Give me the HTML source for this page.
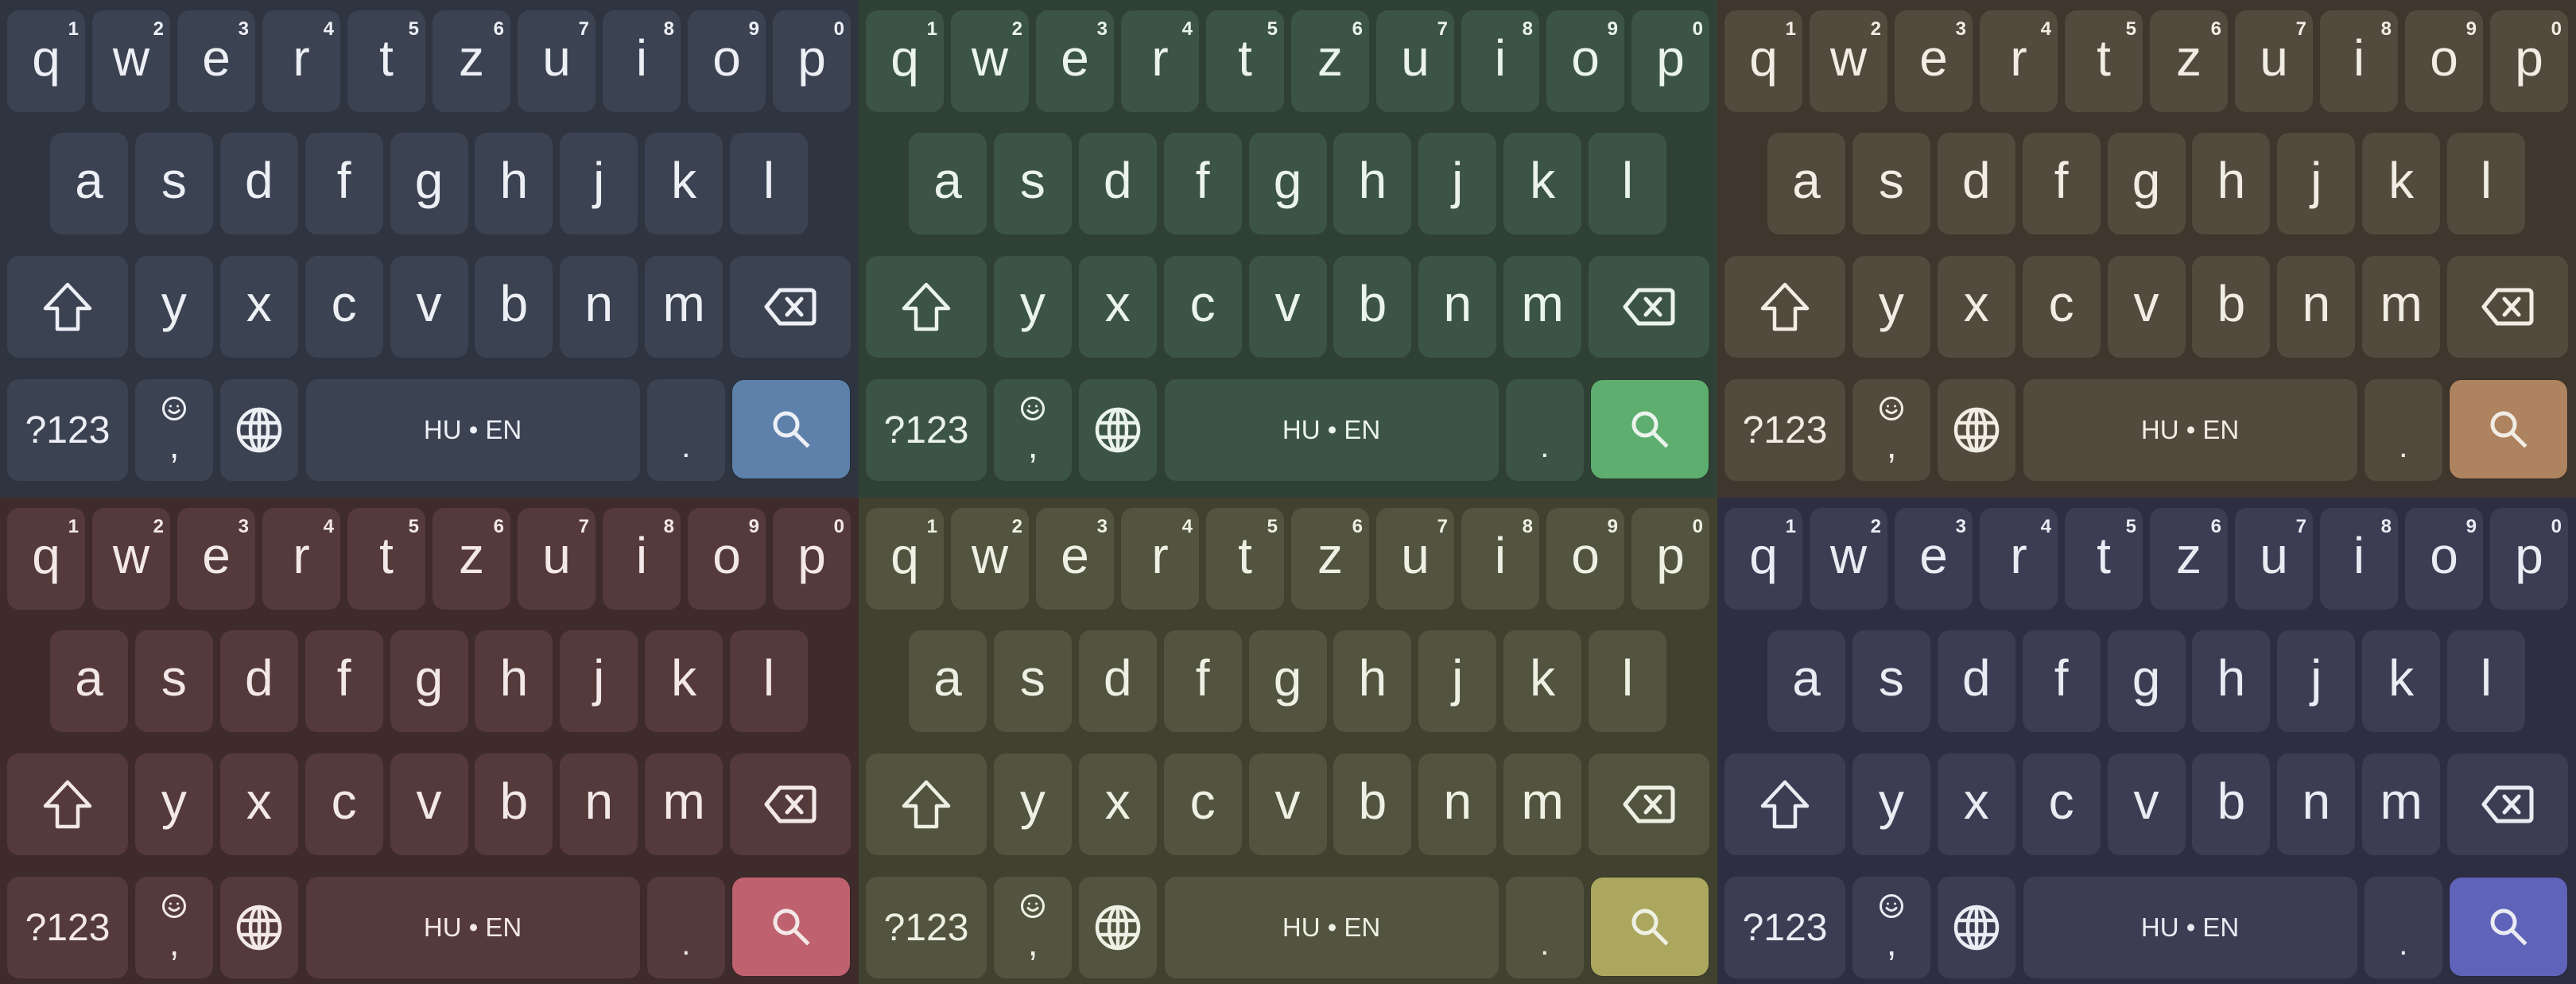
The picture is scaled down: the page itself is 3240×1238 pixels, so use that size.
<!DOCTYPE html>
<html><head><meta charset="utf-8">
<style>
*{margin:0;padding:0;box-sizing:border-box}
html,body{width:3240px;height:1238px;overflow:hidden;background:#2e3440}
body{position:relative;font-family:"Liberation Sans",sans-serif}
.p{position:absolute;width:1080px;height:626px;overflow:hidden;background:var(--bg);color:var(--fg)}
.r{position:absolute;display:flex;justify-content:space-between;height:128px}
.r1{top:13px;left:9px;width:1061px}
.r2{top:167px;left:63px;width:953px}
.r3{top:322px;left:9px;width:1061px}
.r4{top:477px;left:9px;width:1061px}
.k{position:relative;width:98px;height:100%;background:var(--key);border-radius:15px;display:flex;align-items:center;justify-content:center}
.w{width:152px}
.sp{width:420px;font-size:33px}
.l{font-size:64px;line-height:1;padding-bottom:8px}
.n{position:absolute;right:8px;top:10px;font-size:24px;font-weight:bold}
.t123{font-size:48px}
.s{width:148px;height:124px;margin:1px 1px 0 0;background:var(--acc);border-radius:15px;display:flex;align-items:center;justify-content:center;box-shadow:0 0 0 1px rgba(0,0,0,.15)}
.dot{font-size:40px;padding-top:42px}
.em{flex-direction:column;justify-content:flex-start;padding-top:22px}
.cm{font-size:46px;line-height:1;margin-top:8px}
svg.i{overflow:visible}
.c1{--bg:#2e3440;--key:#3b4252;--acc:#5e81ac;--fg:#eceff4}
.c2{--bg:#2f4135;--key:#3c5445;--acc:#5eae6f;--fg:#eaf3ec}
.c3{--bg:#3f362d;--key:#524a3c;--acc:#ae8360;--fg:#f1ece4}
.c4{--bg:#3f2b2c;--key:#553a3b;--acc:#bf616e;--fg:#f3e8e8}
.c5{--bg:#40412f;--key:#52543f;--acc:#aba75e;--fg:#eff0e4}
.c6{--bg:#2e2e42;--key:#3d3c53;--acc:#5f63b9;--fg:#ebebf3}
</style></head><body>
<svg width="0" height="0" style="position:absolute">
<defs>
<g id="shift"><path d="M30 3 L58 33 H43 V59 H17 V33 H2 Z" fill="none" stroke="currentColor" stroke-width="4.5" stroke-linejoin="round"/></g>
<g id="bs"><path d="M19 3 H58 a4 4 0 0 1 4 4 V41 a4 4 0 0 1 -4 4 H19 L2 24 Z" fill="none" stroke="currentColor" stroke-width="5" stroke-linejoin="round"/><path d="M28 14 L46 34 M46 14 L28 34" stroke="currentColor" stroke-width="5" stroke-linecap="round"/></g>
<g id="gl" fill="none" stroke="currentColor" stroke-width="4.5"><circle cx="28" cy="28" r="26"/><ellipse cx="28" cy="28" rx="11" ry="26"/><path d="M28 2 V54 M4 19 H52 M4 37 H52"/></g>
<g id="sr" fill="none" stroke="currentColor" stroke-width="5" stroke-linecap="square"><circle cx="16" cy="16" r="14"/><path d="M27 27 L42 42"/></g>
<g id="sm" fill="none" stroke="currentColor" stroke-width="3"><circle cx="15" cy="15" r="13.5"/><circle cx="10.5" cy="12" r="1.5" fill="currentColor" stroke="none"/><circle cx="19.5" cy="12" r="1.5" fill="currentColor" stroke="none"/><path d="M9 17.5 Q15 23.5 21 17.5" stroke-linecap="round"/></g>
</defs></svg>

<div class="p c1" style="left:0;top:0">
<div class="r r1"><div class="k"><span class="l">q</span><span class="n">1</span></div><div class="k"><span class="l">w</span><span class="n">2</span></div><div class="k"><span class="l">e</span><span class="n">3</span></div><div class="k"><span class="l">r</span><span class="n">4</span></div><div class="k"><span class="l">t</span><span class="n">5</span></div><div class="k"><span class="l">z</span><span class="n">6</span></div><div class="k"><span class="l">u</span><span class="n">7</span></div><div class="k"><span class="l">i</span><span class="n">8</span></div><div class="k"><span class="l">o</span><span class="n">9</span></div><div class="k"><span class="l">p</span><span class="n">0</span></div></div>
<div class="r r2"><div class="k"><span class="l">a</span></div><div class="k"><span class="l">s</span></div><div class="k"><span class="l">d</span></div><div class="k"><span class="l">f</span></div><div class="k"><span class="l">g</span></div><div class="k"><span class="l">h</span></div><div class="k"><span class="l">j</span></div><div class="k"><span class="l">k</span></div><div class="k"><span class="l">l</span></div></div>
<div class="r r3"><div class="k w"><svg class="i" width="60" height="62" viewBox="0 0 60 62"><use href="#shift"/></svg></div><div class="k"><span class="l">y</span></div><div class="k"><span class="l">x</span></div><div class="k"><span class="l">c</span></div><div class="k"><span class="l">v</span></div><div class="k"><span class="l">b</span></div><div class="k"><span class="l">n</span></div><div class="k"><span class="l">m</span></div><div class="k w"><svg class="i" width="64" height="48" viewBox="0 0 64 48"><use href="#bs"/></svg></div></div>
<div class="r r4"><div class="k w"><span class="t123">?123</span></div><div class="k em"><svg class="i" width="30" height="30" viewBox="0 0 30 30"><use href="#sm"/></svg><span class="cm">,</span></div><div class="k"><svg class="i" width="56" height="56" viewBox="0 0 56 56"><use href="#gl"/></svg></div><div class="k sp">HU • EN</div><div class="k"><span class="dot">.</span></div><div class="s"><svg class="i" width="44" height="44" viewBox="0 0 44 44"><use href="#sr"/></svg></div></div>
</div>

<div class="p c2" style="left:1080px;top:0">
<div class="r r1"><div class="k"><span class="l">q</span><span class="n">1</span></div><div class="k"><span class="l">w</span><span class="n">2</span></div><div class="k"><span class="l">e</span><span class="n">3</span></div><div class="k"><span class="l">r</span><span class="n">4</span></div><div class="k"><span class="l">t</span><span class="n">5</span></div><div class="k"><span class="l">z</span><span class="n">6</span></div><div class="k"><span class="l">u</span><span class="n">7</span></div><div class="k"><span class="l">i</span><span class="n">8</span></div><div class="k"><span class="l">o</span><span class="n">9</span></div><div class="k"><span class="l">p</span><span class="n">0</span></div></div>
<div class="r r2"><div class="k"><span class="l">a</span></div><div class="k"><span class="l">s</span></div><div class="k"><span class="l">d</span></div><div class="k"><span class="l">f</span></div><div class="k"><span class="l">g</span></div><div class="k"><span class="l">h</span></div><div class="k"><span class="l">j</span></div><div class="k"><span class="l">k</span></div><div class="k"><span class="l">l</span></div></div>
<div class="r r3"><div class="k w"><svg class="i" width="60" height="62" viewBox="0 0 60 62"><use href="#shift"/></svg></div><div class="k"><span class="l">y</span></div><div class="k"><span class="l">x</span></div><div class="k"><span class="l">c</span></div><div class="k"><span class="l">v</span></div><div class="k"><span class="l">b</span></div><div class="k"><span class="l">n</span></div><div class="k"><span class="l">m</span></div><div class="k w"><svg class="i" width="64" height="48" viewBox="0 0 64 48"><use href="#bs"/></svg></div></div>
<div class="r r4"><div class="k w"><span class="t123">?123</span></div><div class="k em"><svg class="i" width="30" height="30" viewBox="0 0 30 30"><use href="#sm"/></svg><span class="cm">,</span></div><div class="k"><svg class="i" width="56" height="56" viewBox="0 0 56 56"><use href="#gl"/></svg></div><div class="k sp">HU • EN</div><div class="k"><span class="dot">.</span></div><div class="s"><svg class="i" width="44" height="44" viewBox="0 0 44 44"><use href="#sr"/></svg></div></div>
</div>

<div class="p c3" style="left:2160px;top:0">
<div class="r r1"><div class="k"><span class="l">q</span><span class="n">1</span></div><div class="k"><span class="l">w</span><span class="n">2</span></div><div class="k"><span class="l">e</span><span class="n">3</span></div><div class="k"><span class="l">r</span><span class="n">4</span></div><div class="k"><span class="l">t</span><span class="n">5</span></div><div class="k"><span class="l">z</span><span class="n">6</span></div><div class="k"><span class="l">u</span><span class="n">7</span></div><div class="k"><span class="l">i</span><span class="n">8</span></div><div class="k"><span class="l">o</span><span class="n">9</span></div><div class="k"><span class="l">p</span><span class="n">0</span></div></div>
<div class="r r2"><div class="k"><span class="l">a</span></div><div class="k"><span class="l">s</span></div><div class="k"><span class="l">d</span></div><div class="k"><span class="l">f</span></div><div class="k"><span class="l">g</span></div><div class="k"><span class="l">h</span></div><div class="k"><span class="l">j</span></div><div class="k"><span class="l">k</span></div><div class="k"><span class="l">l</span></div></div>
<div class="r r3"><div class="k w"><svg class="i" width="60" height="62" viewBox="0 0 60 62"><use href="#shift"/></svg></div><div class="k"><span class="l">y</span></div><div class="k"><span class="l">x</span></div><div class="k"><span class="l">c</span></div><div class="k"><span class="l">v</span></div><div class="k"><span class="l">b</span></div><div class="k"><span class="l">n</span></div><div class="k"><span class="l">m</span></div><div class="k w"><svg class="i" width="64" height="48" viewBox="0 0 64 48"><use href="#bs"/></svg></div></div>
<div class="r r4"><div class="k w"><span class="t123">?123</span></div><div class="k em"><svg class="i" width="30" height="30" viewBox="0 0 30 30"><use href="#sm"/></svg><span class="cm">,</span></div><div class="k"><svg class="i" width="56" height="56" viewBox="0 0 56 56"><use href="#gl"/></svg></div><div class="k sp">HU • EN</div><div class="k"><span class="dot">.</span></div><div class="s"><svg class="i" width="44" height="44" viewBox="0 0 44 44"><use href="#sr"/></svg></div></div>
</div>

<div class="p c4" style="left:0;top:626px">
<div class="r r1"><div class="k"><span class="l">q</span><span class="n">1</span></div><div class="k"><span class="l">w</span><span class="n">2</span></div><div class="k"><span class="l">e</span><span class="n">3</span></div><div class="k"><span class="l">r</span><span class="n">4</span></div><div class="k"><span class="l">t</span><span class="n">5</span></div><div class="k"><span class="l">z</span><span class="n">6</span></div><div class="k"><span class="l">u</span><span class="n">7</span></div><div class="k"><span class="l">i</span><span class="n">8</span></div><div class="k"><span class="l">o</span><span class="n">9</span></div><div class="k"><span class="l">p</span><span class="n">0</span></div></div>
<div class="r r2"><div class="k"><span class="l">a</span></div><div class="k"><span class="l">s</span></div><div class="k"><span class="l">d</span></div><div class="k"><span class="l">f</span></div><div class="k"><span class="l">g</span></div><div class="k"><span class="l">h</span></div><div class="k"><span class="l">j</span></div><div class="k"><span class="l">k</span></div><div class="k"><span class="l">l</span></div></div>
<div class="r r3"><div class="k w"><svg class="i" width="60" height="62" viewBox="0 0 60 62"><use href="#shift"/></svg></div><div class="k"><span class="l">y</span></div><div class="k"><span class="l">x</span></div><div class="k"><span class="l">c</span></div><div class="k"><span class="l">v</span></div><div class="k"><span class="l">b</span></div><div class="k"><span class="l">n</span></div><div class="k"><span class="l">m</span></div><div class="k w"><svg class="i" width="64" height="48" viewBox="0 0 64 48"><use href="#bs"/></svg></div></div>
<div class="r r4"><div class="k w"><span class="t123">?123</span></div><div class="k em"><svg class="i" width="30" height="30" viewBox="0 0 30 30"><use href="#sm"/></svg><span class="cm">,</span></div><div class="k"><svg class="i" width="56" height="56" viewBox="0 0 56 56"><use href="#gl"/></svg></div><div class="k sp">HU • EN</div><div class="k"><span class="dot">.</span></div><div class="s"><svg class="i" width="44" height="44" viewBox="0 0 44 44"><use href="#sr"/></svg></div></div>
</div>

<div class="p c5" style="left:1080px;top:626px">
<div class="r r1"><div class="k"><span class="l">q</span><span class="n">1</span></div><div class="k"><span class="l">w</span><span class="n">2</span></div><div class="k"><span class="l">e</span><span class="n">3</span></div><div class="k"><span class="l">r</span><span class="n">4</span></div><div class="k"><span class="l">t</span><span class="n">5</span></div><div class="k"><span class="l">z</span><span class="n">6</span></div><div class="k"><span class="l">u</span><span class="n">7</span></div><div class="k"><span class="l">i</span><span class="n">8</span></div><div class="k"><span class="l">o</span><span class="n">9</span></div><div class="k"><span class="l">p</span><span class="n">0</span></div></div>
<div class="r r2"><div class="k"><span class="l">a</span></div><div class="k"><span class="l">s</span></div><div class="k"><span class="l">d</span></div><div class="k"><span class="l">f</span></div><div class="k"><span class="l">g</span></div><div class="k"><span class="l">h</span></div><div class="k"><span class="l">j</span></div><div class="k"><span class="l">k</span></div><div class="k"><span class="l">l</span></div></div>
<div class="r r3"><div class="k w"><svg class="i" width="60" height="62" viewBox="0 0 60 62"><use href="#shift"/></svg></div><div class="k"><span class="l">y</span></div><div class="k"><span class="l">x</span></div><div class="k"><span class="l">c</span></div><div class="k"><span class="l">v</span></div><div class="k"><span class="l">b</span></div><div class="k"><span class="l">n</span></div><div class="k"><span class="l">m</span></div><div class="k w"><svg class="i" width="64" height="48" viewBox="0 0 64 48"><use href="#bs"/></svg></div></div>
<div class="r r4"><div class="k w"><span class="t123">?123</span></div><div class="k em"><svg class="i" width="30" height="30" viewBox="0 0 30 30"><use href="#sm"/></svg><span class="cm">,</span></div><div class="k"><svg class="i" width="56" height="56" viewBox="0 0 56 56"><use href="#gl"/></svg></div><div class="k sp">HU • EN</div><div class="k"><span class="dot">.</span></div><div class="s"><svg class="i" width="44" height="44" viewBox="0 0 44 44"><use href="#sr"/></svg></div></div>
</div>

<div class="p c6" style="left:2160px;top:626px">
<div class="r r1"><div class="k"><span class="l">q</span><span class="n">1</span></div><div class="k"><span class="l">w</span><span class="n">2</span></div><div class="k"><span class="l">e</span><span class="n">3</span></div><div class="k"><span class="l">r</span><span class="n">4</span></div><div class="k"><span class="l">t</span><span class="n">5</span></div><div class="k"><span class="l">z</span><span class="n">6</span></div><div class="k"><span class="l">u</span><span class="n">7</span></div><div class="k"><span class="l">i</span><span class="n">8</span></div><div class="k"><span class="l">o</span><span class="n">9</span></div><div class="k"><span class="l">p</span><span class="n">0</span></div></div>
<div class="r r2"><div class="k"><span class="l">a</span></div><div class="k"><span class="l">s</span></div><div class="k"><span class="l">d</span></div><div class="k"><span class="l">f</span></div><div class="k"><span class="l">g</span></div><div class="k"><span class="l">h</span></div><div class="k"><span class="l">j</span></div><div class="k"><span class="l">k</span></div><div class="k"><span class="l">l</span></div></div>
<div class="r r3"><div class="k w"><svg class="i" width="60" height="62" viewBox="0 0 60 62"><use href="#shift"/></svg></div><div class="k"><span class="l">y</span></div><div class="k"><span class="l">x</span></div><div class="k"><span class="l">c</span></div><div class="k"><span class="l">v</span></div><div class="k"><span class="l">b</span></div><div class="k"><span class="l">n</span></div><div class="k"><span class="l">m</span></div><div class="k w"><svg class="i" width="64" height="48" viewBox="0 0 64 48"><use href="#bs"/></svg></div></div>
<div class="r r4"><div class="k w"><span class="t123">?123</span></div><div class="k em"><svg class="i" width="30" height="30" viewBox="0 0 30 30"><use href="#sm"/></svg><span class="cm">,</span></div><div class="k"><svg class="i" width="56" height="56" viewBox="0 0 56 56"><use href="#gl"/></svg></div><div class="k sp">HU • EN</div><div class="k"><span class="dot">.</span></div><div class="s"><svg class="i" width="44" height="44" viewBox="0 0 44 44"><use href="#sr"/></svg></div></div>
</div>
</body></html>
